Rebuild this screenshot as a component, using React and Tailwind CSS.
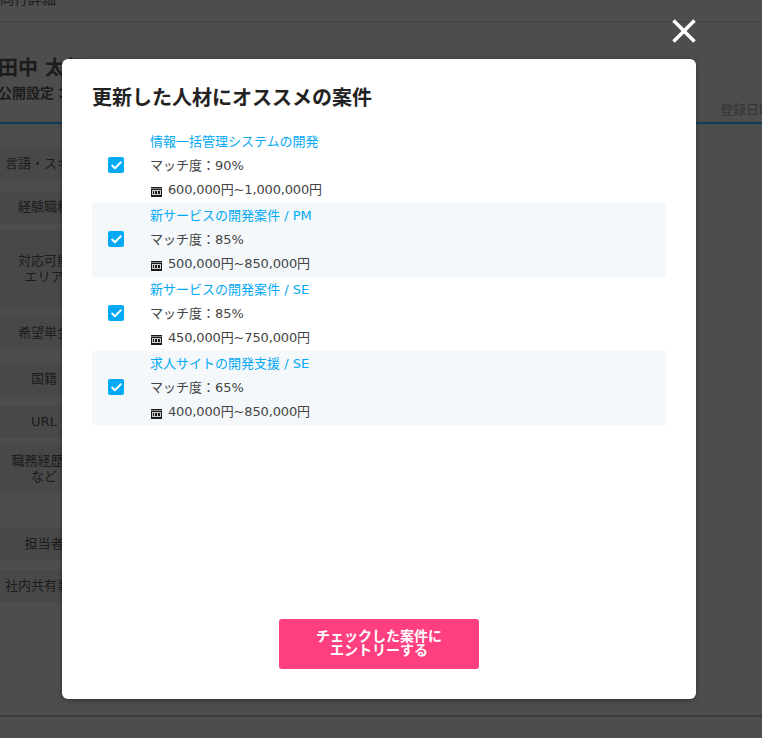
import { Check } from "lucide-react";

const jobs = [
  { title: "情報一括管理システムの開発", match: "90%", pay: "600,000円~1,000,000円" },
  { title: "新サービスの開発案件 / PM", match: "85%", pay: "500,000円~850,000円" },
  { title: "新サービスの開発案件 / SE", match: "85%", pay: "450,000円~750,000円" },
  { title: "求人サイトの開発支援 / SE", match: "65%", pay: "400,000円~850,000円" },
];

const rows = [
  { label: ["言語・スキル"], h: "h-[32px]", mt: "mt-[24px]" },
  { label: ["経験職種"], h: "h-[32px]", mt: "mt-[11px]" },
  { label: ["対応可能", "エリア"], h: "h-[78px]", mt: "mt-[7px]" },
  { label: ["希望単金"], h: "h-[32px]", mt: "mt-[9px]" },
  { label: ["国籍"], h: "h-[32px]", mt: "mt-[14px]" },
  { label: ["URL"], h: "h-[32px]", mt: "mt-[11px]" },
  { label: ["職務経歴書", "など"], h: "h-[48px]", mt: "mt-[7px]" },
  { label: ["担当者"], h: "h-[32px]", mt: "mt-[35px]" },
  { label: ["社内共有事項"], h: "h-[32px]", mt: "mt-[10px]" },
];

function MoneyIcon() {
  return (
    <svg width="11" height="10" viewBox="0 0 11 10" className="mt-[4px] ml-[1px] shrink-0">
      <rect x="0" y="0" width="11" height="10" fill="#1a1a1a" />
      <rect x="0" y="1" width="11" height="1" fill="#888" />
      <rect x="1" y="3" width="9" height="5" fill="#ccc" />
      <rect x="2" y="4" width="1" height="3" fill="#1a1a1a" />
      <rect x="4" y="4" width="2" height="3" fill="#1a1a1a" />
      <rect x="7" y="4" width="2" height="3" fill="#1a1a1a" />
    </svg>
  );
}

export default function App() {
  return (
    <div className="relative w-[762px] h-[738px] overflow-hidden bg-[#4d4d4d] text-[13px] text-[#1c1c1c] font-['DejaVu_Sans','Noto_Sans_CJK_JP',sans-serif]">
      {/* page behind the overlay */}
      <div className="h-[22px] border-b border-[#3f3f3f] overflow-hidden">
        <p className="-mt-[11px] text-[14px] leading-[20px]">同行詳細</p>
      </div>
      <div className="h-[16px] border-b border-[#484848]" />
      <div className="flex h-[86px] flex-col border-b-2 border-[#0b3f5c]">
        <p className="mt-[18px] text-[20px] leading-[24px] font-bold -ml-[2px]">田中 太郎</p>
        <div className="flex justify-between">
          <p className="mt-[3px] text-[14px] font-bold leading-[20px] -ml-[2px]">公開設定：</p>
          <p className="mt-[21px] mr-[-20px] w-[62px] text-[13px] leading-[18px] whitespace-nowrap text-[#333]">登録日時</p>
        </div>
      </div>
      <div className="flex flex-col">
        {rows.map((row) => (
          <div
            key={row.label[0]}
            className={`flex w-[88px] flex-col items-center justify-center bg-[#484848] text-center leading-[16px] whitespace-nowrap ${row.h} ${row.mt}`}
          >
            {row.label.map((line) => (
              <span key={line}>{line}</span>
            ))}
          </div>
        ))}
      </div>
      <div className="absolute left-0 right-0 top-[715px] border-t-2 border-[#3d3d3d]" />

      {/* close button */}
      <button className="absolute left-[671px] top-[18px] text-white">
        <svg width="26" height="26" viewBox="0 0 26 26">
          <path d="M2.5 2.5L23.5 23.5M23.5 2.5L2.5 23.5" stroke="#fff" strokeWidth="3.6" fill="none" />
        </svg>
      </button>

      {/* modal */}
      <div className="absolute left-[62px] top-[59px] flex h-[640px] w-[634px] flex-col rounded-[6px] bg-white px-[30px] shadow-[0_1px_4px_rgba(0,0,0,0.4)]">
        <h2 className="mt-[26px] text-[20px] leading-[26px] font-bold text-[#222]">更新した人材にオススメの案件</h2>
        <ul className="mt-[18px] flex flex-col">
          {jobs.map((job, i) => (
            <li key={i} className={`flex h-[74px] items-center ${i % 2 === 1 ? "bg-[#f4f8fb]" : ""}`}>
              <span className="mb-[2px] ml-[16px] flex h-[16px] w-[16px] items-center justify-center rounded-[2px] bg-[#03a9f4]">
                <Check size={13} strokeWidth={3.5} color="#fff" />
              </span>
              <div className="ml-[26px] flex flex-col leading-[24px]">
                <a className="text-[#03a9f4]">{job.title}</a>
                <span className="text-[#444]">マッチ度：{job.match}</span>
                <span className="flex items-center gap-[6px] tracking-[-0.15px] text-[#444]">
                  <MoneyIcon />
                  {job.pay}
                </span>
              </div>
            </li>
          ))}
        </ul>
        <button className="mx-auto mt-[194px] h-[50px] w-[200px] rounded-[3px] bg-[#ff3f7f] pb-[2px] text-[14px] leading-[14px] font-bold text-white">
          チェックした案件に
          <br />
          エントリーする
        </button>
      </div>
    </div>
  );
}
